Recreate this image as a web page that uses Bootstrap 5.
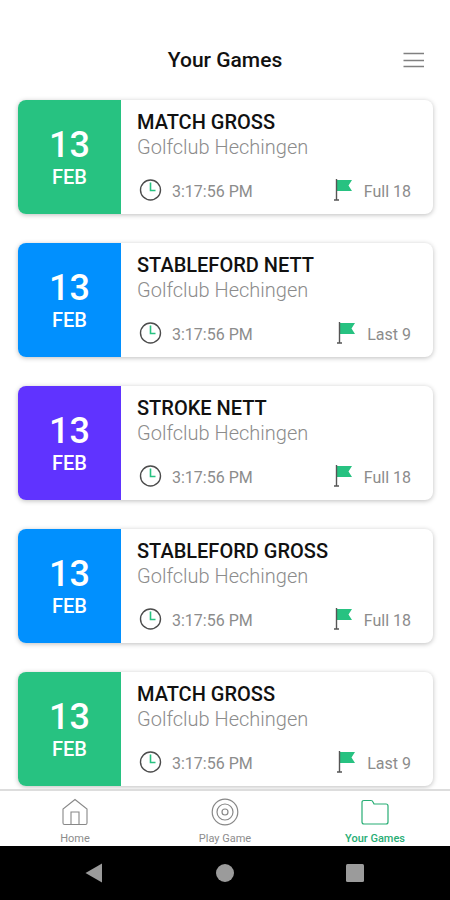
<!DOCTYPE html>
<html lang="en">
<head>
<meta charset="utf-8">
<meta name="viewport" content="width=device-width, initial-scale=1">
<title>Your Games</title>
<link href="https://cdn.jsdelivr.net/npm/bootstrap@5.3.0/dist/css/bootstrap.min.css" rel="stylesheet">
<style>
  body { font-family: Roboto, "Liberation Sans", sans-serif; color: #111; background: #fff; }
  svg { display: block; flex: none; }
  .app-header { padding: 40px 24px 20px; }
  .app-header h1 { font-size: 21px; line-height: 40px; font-weight: 500; }
  .menu-btn { width: 24px; height: 40px; }
  .games { gap: 29px; padding: 0 17px 0 18px; min-height: 0; }
  .game { border-radius: 8px; min-height: 114px; flex: none; box-shadow: 0 1px 5px rgba(0,0,0,.26); background: #fff; }
  .game-date { width: 103px; color: #fff; font-weight: 500; padding-top: 4px; }
  .game-day { font-size: 36px; line-height: 36px; }
  .game-month { font-size: 20px; line-height: 28px; }
  .green { background: #27c281; }
  .blue { background: #0190fe; }
  .violet { background: #6033ff; }
  .game-body { padding: 10px 22px 10px 16px; }
  .game-title { font-size: 20px; line-height: 25px; font-weight: 500; }
  .game-club { font-size: 20px; line-height: 25px; font-weight: 300; color: #8c8c8c; }
  .game-meta { font-size: 16px; line-height: 24px; color: #8c8c8c; }
  .game-meta > span { gap: 9px; }
  .game-meta > .holes { gap: 11px; }
  .game-meta .label { padding-top: 2px; }
  .tabs { border-top: 2px solid #ddd; min-height: 57px; background: #fff; }
  .tabs a { font-size: 11px; line-height: 14px; color: #8c8c8c; padding-top: 7px; gap: 6px; }
  .tabs a.active { color: #27ad74; font-weight: 500; }
  .system-bar { background: #000; height: 54px; gap: 106px; }
</style>
<script defer src="https://cdn.jsdelivr.net/npm/bootstrap@5.3.0/dist/js/bootstrap.bundle.min.js"></script>
</head>
<body class="vh-100 d-flex flex-column overflow-hidden">
<svg width="0" height="0" class="position-absolute" aria-hidden="true">
  <symbol id="clock" viewBox="0 0 26 24">
    <circle cx="13.500" cy="12" r="10" fill="none" stroke="#4c4c4c" stroke-width="1.4"/>
    <path d="M13.500 4.500v8h5" fill="none" stroke="#27c281" stroke-width="1.6"/>
  </symbol>
  <symbol id="flag" viewBox="0 0 20 24">
    <path d="M4 2h15l-3.500 5.500 3.500 5.500H4z" fill="#27c281"/>
    <path d="M3.500 1v21M1 22h5" fill="none" stroke="#555" stroke-width="1.400"/>
  </symbol>
</svg>

<header class="app-header d-flex align-items-center">
  <span class="menu-btn"></span>
  <h1 class="flex-grow-1 text-center m-0">Your Games</h1>
  <button type="button" class="menu-btn btn p-0 border-0" aria-label="Menu">
    <svg width="24" height="20" viewBox="0 0 24 20" stroke="#808080" stroke-width="1.600"><path d="M1.500 3.500h20.500M1.500 10.500h20.500M1.500 16.500h20.500"/></svg>
  </button>
</header>

<main class="games flex-grow-1 d-flex flex-column">
  <article class="game d-flex overflow-hidden">
    <div class="game-date green d-flex flex-column align-items-center justify-content-center"><span class="game-day">13</span><span class="game-month">FEB</span></div>
    <div class="game-body flex-grow-1 d-flex flex-column">
      <h2 class="game-title m-0">MATCH GROSS</h2><p class="game-club m-0">Golfclub Hechingen</p>
      <div class="game-meta d-flex justify-content-between mt-auto">
        <span class="d-flex"><svg width="26" height="24"><use href="#clock"/></svg><span class="label">3:17:56 PM</span></span>
        <span class="holes d-flex"><svg width="20" height="24"><use href="#flag"/></svg><span class="label">Full 18</span></span>
      </div>
    </div>
  </article>
  <article class="game d-flex overflow-hidden">
    <div class="game-date blue d-flex flex-column align-items-center justify-content-center"><span class="game-day">13</span><span class="game-month">FEB</span></div>
    <div class="game-body flex-grow-1 d-flex flex-column">
      <h2 class="game-title m-0">STABLEFORD NETT</h2><p class="game-club m-0">Golfclub Hechingen</p>
      <div class="game-meta d-flex justify-content-between mt-auto">
        <span class="d-flex"><svg width="26" height="24"><use href="#clock"/></svg><span class="label">3:17:56 PM</span></span>
        <span class="holes d-flex"><svg width="20" height="24"><use href="#flag"/></svg><span class="label">Last 9</span></span>
      </div>
    </div>
  </article>
  <article class="game d-flex overflow-hidden">
    <div class="game-date violet d-flex flex-column align-items-center justify-content-center"><span class="game-day">13</span><span class="game-month">FEB</span></div>
    <div class="game-body flex-grow-1 d-flex flex-column">
      <h2 class="game-title m-0">STROKE NETT</h2><p class="game-club m-0">Golfclub Hechingen</p>
      <div class="game-meta d-flex justify-content-between mt-auto">
        <span class="d-flex"><svg width="26" height="24"><use href="#clock"/></svg><span class="label">3:17:56 PM</span></span>
        <span class="holes d-flex"><svg width="20" height="24"><use href="#flag"/></svg><span class="label">Full 18</span></span>
      </div>
    </div>
  </article>
  <article class="game d-flex overflow-hidden">
    <div class="game-date blue d-flex flex-column align-items-center justify-content-center"><span class="game-day">13</span><span class="game-month">FEB</span></div>
    <div class="game-body flex-grow-1 d-flex flex-column">
      <h2 class="game-title m-0">STABLEFORD GROSS</h2><p class="game-club m-0">Golfclub Hechingen</p>
      <div class="game-meta d-flex justify-content-between mt-auto">
        <span class="d-flex"><svg width="26" height="24"><use href="#clock"/></svg><span class="label">3:17:56 PM</span></span>
        <span class="holes d-flex"><svg width="20" height="24"><use href="#flag"/></svg><span class="label">Full 18</span></span>
      </div>
    </div>
  </article>
  <article class="game d-flex overflow-hidden">
    <div class="game-date green d-flex flex-column align-items-center justify-content-center"><span class="game-day">13</span><span class="game-month">FEB</span></div>
    <div class="game-body flex-grow-1 d-flex flex-column">
      <h2 class="game-title m-0">MATCH GROSS</h2><p class="game-club m-0">Golfclub Hechingen</p>
      <div class="game-meta d-flex justify-content-between mt-auto">
        <span class="d-flex"><svg width="26" height="24"><use href="#clock"/></svg><span class="label">3:17:56 PM</span></span>
        <span class="holes d-flex"><svg width="20" height="24"><use href="#flag"/></svg><span class="label">Last 9</span></span>
      </div>
    </div>
  </article>
</main>

<nav class="tabs row g-0 position-relative" aria-label="Main">
  <a href="#" class="col d-flex flex-column align-items-center text-decoration-none">
    <svg width="28" height="28" viewBox="0 0 28 28" fill="none" stroke="#888" stroke-width="1.100"><path d="M14 1.500 2 11v14q0 1.500 1.500 1.500h21q1.500 0 1.500-1.500V11zM10 26.500V14h8v12.500"/></svg>Home</a>
  <a href="#" class="col d-flex flex-column align-items-center text-decoration-none">
    <svg width="28" height="28" viewBox="0 0 28 28" fill="none" stroke="#888" stroke-width="1.200"><circle cx="14" cy="14" r="12.800"/><circle cx="14" cy="14" r="8"/><circle cx="14" cy="14" r="3"/></svg>Play Game</a>
  <a href="#" class="active col d-flex flex-column align-items-center text-decoration-none" aria-current="page">
    <svg width="28" height="28" viewBox="0 0 28 28" fill="none" stroke="#27ad74" stroke-width="1.200"><path d="M1 4.500Q1 2.500 3 2.500H10q1.500 0 2 1.500l1 2H25q2 0 2 2V24q0 2-2 2H3q-2 0-2-2z"/></svg>Your Games</a>
</nav>

<footer class="system-bar d-flex flex-shrink-0 align-items-center justify-content-center">
  <button type="button" class="btn p-0 border-0" aria-label="Back"><svg width="24" height="24" fill="#9b9b9b"><path d="M2.500 12 19 2.500v19z"/></svg></button>
  <button type="button" class="btn p-0 border-0" aria-label="Home screen"><svg width="24" height="24" fill="#9b9b9b"><circle cx="12" cy="12" r="9"/></svg></button>
  <button type="button" class="btn p-0 border-0" aria-label="Recent apps"><svg width="24" height="24" fill="#9b9b9b"><rect x="3" y="3" width="18" height="18" rx="1.500"/></svg></button>
</footer>
</body>
</html>
